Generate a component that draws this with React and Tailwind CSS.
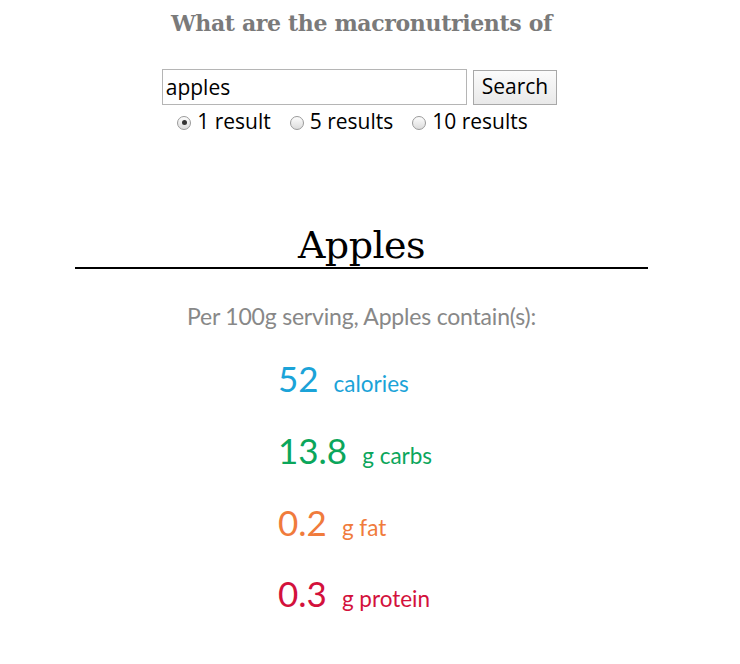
import { useState } from 'react';

const MACROS = [
  { value: '52', label: 'calories', color: 'text-[#1ba3d8]' },
  { value: '13.8', label: 'g carbs', color: 'text-[#0ba65b]' },
  { value: '0.2', label: 'g fat', color: 'text-[#f07b3c]' },
  { value: '0.3', label: 'g protein', color: 'text-[#d3113c]' },
];

const COUNTS = [
  { n: 1, label: '1 result' },
  { n: 5, label: '5 results' },
  { n: 10, label: '10 results' },
];

export default function App() {
  const [query, setQuery] = useState('apples');
  const [count, setCount] = useState(1);

  return (
    <div className="min-h-screen bg-white">
      <div className="w-[573px] ml-[75px] flex flex-col items-center">
        {/* Question */}
        <h2 className="mt-[7px] text-[22px] leading-[32px] font-bold text-[#7a7a7a] font-['DejaVu_Serif',serif] tracking-[-0.35px]">
          What are the macronutrients of
        </h2>

        {/* Search form */}
        <form className="mt-[30px] flex items-center gap-[6px] mr-[4px]" onSubmit={e => e.preventDefault()}>
          <input
            value={query}
            onChange={e => setQuery(e.target.value)}
            className="w-[305px] h-[36px] border border-[#b5b5b5] px-[3px] text-[21px] text-black font-['Open_Sans',sans-serif] outline-none"
          />
          <button className="h-[35px] px-[8px] border border-[#a8a8a8] bg-gradient-to-b from-[#fbfbfb] to-[#e9e9e9] text-[21px] text-black font-['Open_Sans',sans-serif]">
            Search
          </button>
        </form>

        <div className="mt-[2px] mr-[18px] flex items-center gap-[19px] text-[21px] leading-[28px] text-black font-['Open_Sans',sans-serif]">
          {COUNTS.map(c => (
            <label key={c.n} className="flex items-center gap-[6px]" onClick={() => setCount(c.n)}>
              <span className="w-[14px] h-[14px] rounded-full border border-[#9a9a9a] bg-gradient-to-b from-[#fdfdfd] to-[#dcdcdc] flex items-center justify-center mt-[3px]">
                {count === c.n && <span className="w-[5px] h-[5px] rounded-full bg-[#333]" />}
              </span>
              <span>{c.label}</span>
            </label>
          ))}
        </div>

        {/* Result */}
        <h1 className="mt-[88px] text-[38px] leading-[44px] text-black font-['DejaVu_Serif',serif] tracking-[-0.5px]">
          Apples
        </h1>
        <div className="w-full h-[2px] bg-black" />

        <p className="mt-[33px] text-[23px] leading-[28px] text-[#888] font-['Lato',sans-serif] tracking-[-0.2px]">
          Per 100g serving, Apples contain(s):
        </p>

        <div className="self-start ml-[203px] mt-[26px] flex flex-col gap-[27px] font-['Lato',sans-serif]">
          {MACROS.map(m => (
            <div key={m.label} className={`flex items-baseline gap-[15px] ${m.color}`}>
              <span className="text-[35px] leading-[44px]">{m.value}</span>
              <span className="text-[22.5px]">{m.label}</span>
            </div>
          ))}
        </div>
      </div>
    </div>
  );
}
